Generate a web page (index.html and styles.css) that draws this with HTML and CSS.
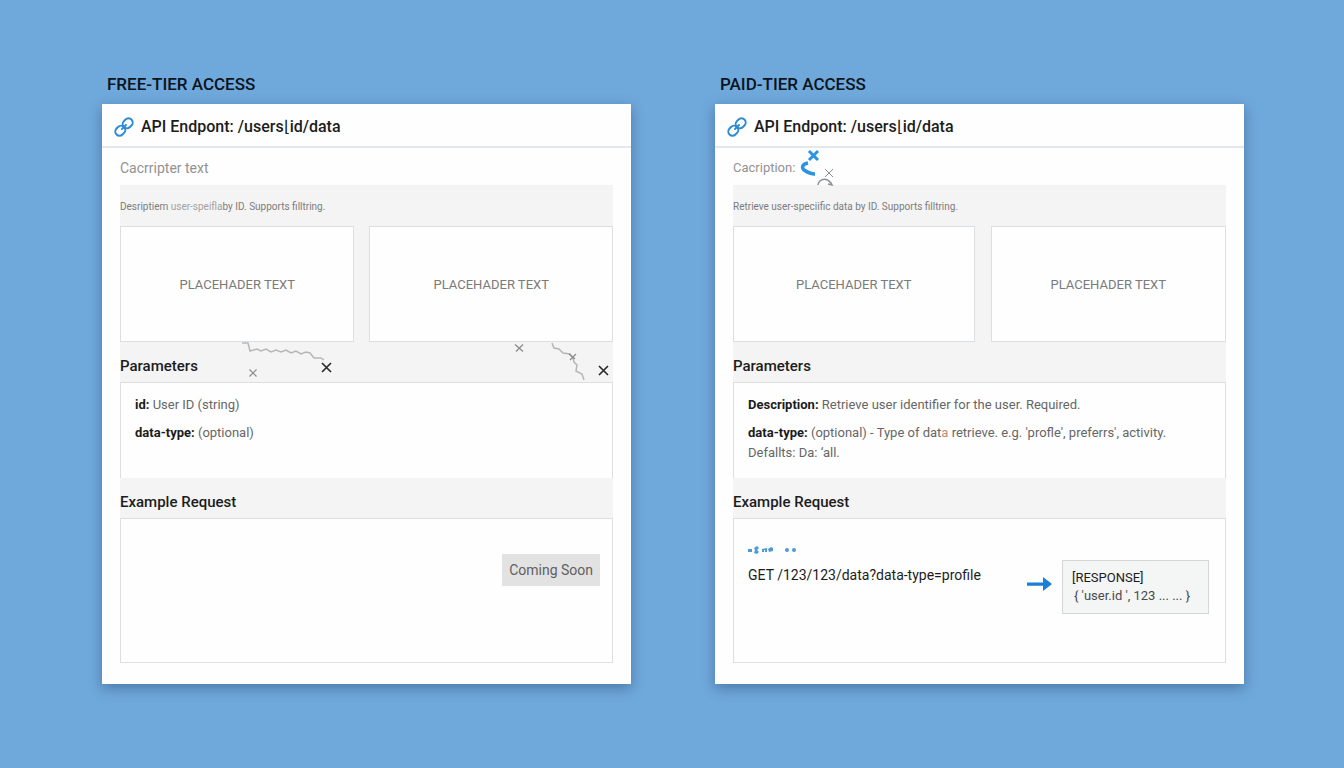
FILE: index.html
```html
<!DOCTYPE html>
<html lang="en">
<head>
  <meta charset="UTF-8" />
  <meta name="viewport" content="width=device-width, initial-scale=1.0"/>
  <title>API Access Tiers</title>
  <link rel="stylesheet" href="styles.css">
</head>
<body>

  <main class="tiers">

    <!-- Free tier -->
    <section class="tier free">
      <h1>FREE-TIER ACCESS</h1>
      <div class="card">
        <header class="card-head">
          <svg class="link-icon" viewBox="0 0 20 20" aria-hidden="true">
            <rect x="8.4" y="2.1" width="10.6" height="8.4" rx="4.2" transform="rotate(-45 13.7 6.3)"/>
            <rect x="1" y="9.500" width="10.6" height="8.4" rx="4.2" transform="rotate(-45 6.3 13.7)"/>
            <path d="M8 12l4-4"/>
          </svg>
          <h2>API Endpont: /users⌊id/data</h2>
        </header>
        <p class="caption">Cacrripter text</p>

        <div class="panel">
          <p class="description">Desriptiem <span class="faint">user-speifla</span>by ID. Supports filltring.</p>
          <div class="placeholders">
            <div class="placeholder">PLACEHADER TEXT</div>
            <div class="placeholder">PLACEHADER TEXT</div>
          </div>

          <div class="strip">
            <h3>Parameters</h3>
            <svg class="scribble" viewBox="0 0 492 40" aria-hidden="true">
              <path class="wave" d="M122 1h6l2 8 7-2 4 2 5-2 5 3 5-2 5 2 5-2 5 3 5-2 5 3 5-2 4 1 4 5h7l3 2"/>
              <path class="cross" d="M129.500 27.500l7 7m0-7l-7 7"/>
              <path class="cross dark" d="M202 21l9 9m0-9l-9 9"/>
              <path class="cross" d="M395 2.500l8 7m0-7l-7 7"/>
              <path class="wave" d="M432 1l2 5 5 1 4 4 7 1 3 4 1 4 3 3-1 6 6 3 2 6"/>
              <path class="cross" d="M449 12l6 5m1-5l-6 6"/>
              <path class="cross dark" d="M479 24l9 9m0-9l-9 9"/>
            </svg>
          </div>
          <div class="box params">
            <p><b>id:</b> User ID (string)</p>
            <p><b>data-type:</b> (optional)</p>
          </div>

          <div class="strip">
            <h3>Example Request</h3>
          </div>
          <div class="box example">
            <span class="soon">Coming Soon</span>
          </div>
        </div>
      </div>
    </section>

    <!-- Paid tier -->
    <section class="tier paid">
      <h1>PAID-TIER ACCESS</h1>
      <div class="card">
        <header class="card-head">
          <svg class="link-icon" viewBox="0 0 20 20" aria-hidden="true">
            <rect x="8.4" y="2.1" width="10.6" height="8.4" rx="4.2" transform="rotate(-45 13.7 6.3)"/>
            <rect x="1" y="9.500" width="10.6" height="8.4" rx="4.2" transform="rotate(-45 6.3 13.7)"/>
            <path d="M8 12l4-4"/>
          </svg>
          <h2>API Endpont: /users⌊id/data</h2>
        </header>
        <p class="caption">Cacription:
          <svg class="doodle" viewBox="0 0 36 40" aria-hidden="true">
            <path class="blue" d="M9 3l9 9m0-9l-9 9" stroke-width="3"/>
            <path class="blue" d="M8 15c-5 1-7 4-4 7 3 2 6 4 11 4" stroke-width="3.500"/>
            <path class="grey" d="M25 21l8 8m0-8l-8 8"/>
            <path class="grey" d="M18 37c1-6 8-8 13-2l1 2-4-1" stroke-width="1.500"/>
          </svg>
        </p>

        <div class="panel">
          <p class="description">Retrieve user-speciific data by ID. Supports filltring.</p>
          <div class="placeholders">
            <div class="placeholder">PLACEHADER TEXT</div>
            <div class="placeholder">PLACEHADER TEXT</div>
          </div>

          <div class="strip">
            <h3>Parameters</h3>
          </div>
          <div class="box params">
            <p><b>Description:</b> Retrieve user identifier for the user. Required.</p>
            <p><b>data-type:</b> (optional) - Type of dat<span class="warm">a</span> retrieve. e.g. 'profle', preferrs', activity. <br>Defallts: Da: ‘all.</p>
          </div>

          <div class="strip">
            <h3>Example Request</h3>
          </div>
          <div class="box example">
            <div class="request">
              <svg class="dots" viewBox="0 0 50 10" aria-hidden="true">
                <path d="M0 4h4v3H0zM6 3l3-2 2 2-2 2 2 2-2 2-3-1 1-3zM14 4l5-1v4h-2V5h-1v2h-2zM20 4l3-2 2 1v3l-4 1z"/>
                <circle cx="39" cy="5" r="2"/>
                <circle cx="46" cy="5" r="2"/>
              </svg>
              <code>GET /123/123/data?data-type=profile</code>
            </div>
            <svg class="arrow" viewBox="0 0 26 14" aria-hidden="true">
              <path d="M0 5.500h16V0l9 7-9 7V8.800H0z"/>
            </svg>
            <div class="response">
              <p>[RESPONSE]</p>
              <p class="json">{ 'user.id ', 123 ... ... }</p>
            </div>
          </div>
        </div>
      </div>
    </section>

  </main>

</body>
</html>
```

FILE: styles.css
```css
* {
  box-sizing: border-box;
}

body {
  margin: 0;
  min-height: 100vh;
  background: #6fa8da;
  font-family: Roboto, "Noto Sans", sans-serif;
  color: #1c1c1c;
}

h1, h2, h3, p {
  margin: 0;
  font-weight: 500;
}

.tiers {
  display: grid;
  grid-template-columns: 1fr 1fr;
  gap: 84px;
  max-width: 1500px;
  margin: 0 auto;
  padding: 72px 100px 84px 102px;
}

.tier h1 {
  padding-left: 5px;
  font-size: 17px;
  line-height: 24px;
  margin-bottom: 8px;
  color: #0c141c;
}

.card {
  background: #fefefe;
  box-shadow: 0 4px 12px rgba(20, 50, 90, 0.4);
  padding-bottom: 21px;
}

.card-head {
  display: flex;
  align-items: center;
  gap: 7px;
  height: 44px;
  padding: 4px 12px 0;
  border-bottom: 2px solid #e4e8ec;
}

.card-head h2 {
  font-size: 16px;
  line-height: 20px;
}

.link-icon {
  width: 20px;
  height: 20px;
  fill: none;
  stroke: #2b8bd6;
  stroke-width: 2;
  stroke-linecap: round;
}

.caption {
  position: relative;
  padding: 10px 18px 7px;
  font-size: 14px;
  line-height: 20px;
  font-weight: 400;
  color: #929292;
}

.paid .caption {
  font-size: 13px;
}

.doodle {
  position: absolute;
  left: 85px;
  top: 0;
  width: 36px;
  height: 40px;
  fill: none;
}

.doodle .blue {
  stroke: #2b93e0;
}

.doodle .grey {
  stroke: #8d9094;
}

.panel {
  margin: 0 18px;
  background: #f4f4f4;
}

.description {
  padding: 14px 0 11px;
  font-size: 10px;
  line-height: 16px;
  font-weight: 400;
  color: #7c7c7c;
}

.faint {
  color: #a2a2a2;
}

.placeholders {
  display: grid;
  grid-template-columns: 234fr 243fr;
  gap: 15px;
}

.paid .placeholders {
  grid-template-columns: 241fr 235fr;
  gap: 16px;
}

.placeholder {
  display: flex;
  align-items: center;
  justify-content: center;
  height: 116px;
  background: #fefefe;
  border: 1px solid #dcdfe1;
  font-size: 13px;
  color: #7a7a7a;
}

.strip {
  position: relative;
  padding: 14px 0 6px;
}

.strip h3 {
  font-size: 15px;
  line-height: 20px;
}

.scribble {
  position: absolute;
  left: 0;
  top: 0;
  width: 492px;
  height: 40px;
  fill: none;
}

.wave {
  stroke: #b4b6b8;
  stroke-width: 1.5;
}

.cross {
  stroke: #898b8d;
  stroke-width: 1.2;
}

.cross.dark {
  stroke: #262626;
  stroke-width: 1.6;
}

.box {
  background: #fefefe;
  border: 1px solid #dcdfe1;
}

.params {
  min-height: 96px;
  padding: 12px 14px;
  border-bottom: none;
  font-size: 13px;
  line-height: 20px;
}

.params p {
  font-weight: 400;
  color: #666;
}

.params p + p {
  margin-top: 8px;
}

.params b {
  font-weight: 700;
  color: #1c1c1c;
}

.warm {
  color: #c08a72;
}

.example {
  display: flex;
  align-items: flex-start;
  min-height: 145px;
  padding: 26px 16px 16px 14px;
}

.soon {
  margin: 9px -4px 0 auto;
  padding: 6px 7px;
  background: #e2e2e2;
  font-size: 14px;
  line-height: 20px;
  color: #606060;
}

.request {
  flex: 1;
}

.dots {
  display: block;
  width: 50px;
  height: 10px;
  margin-bottom: 10px;
  fill: #4c9bd4;
}

.request code {
  font: 400 14px/20px Roboto, "Noto Sans", sans-serif;
}

.arrow {
  width: 26px;
  height: 14px;
  margin: 32px 9px 0 0;
  fill: #1a7fd6;
}

.response {
  width: 147px;
  margin-top: 15px;
  padding: 8px 9px;
  background: #f4f5f5;
  border: 1px solid #d4d6d8;
  font-size: 13px;
  line-height: 18px;
}

.response p {
  font-weight: 400;
}

.response .json {
  padding-left: 2px;
  color: #4a4a4a;
}
```
